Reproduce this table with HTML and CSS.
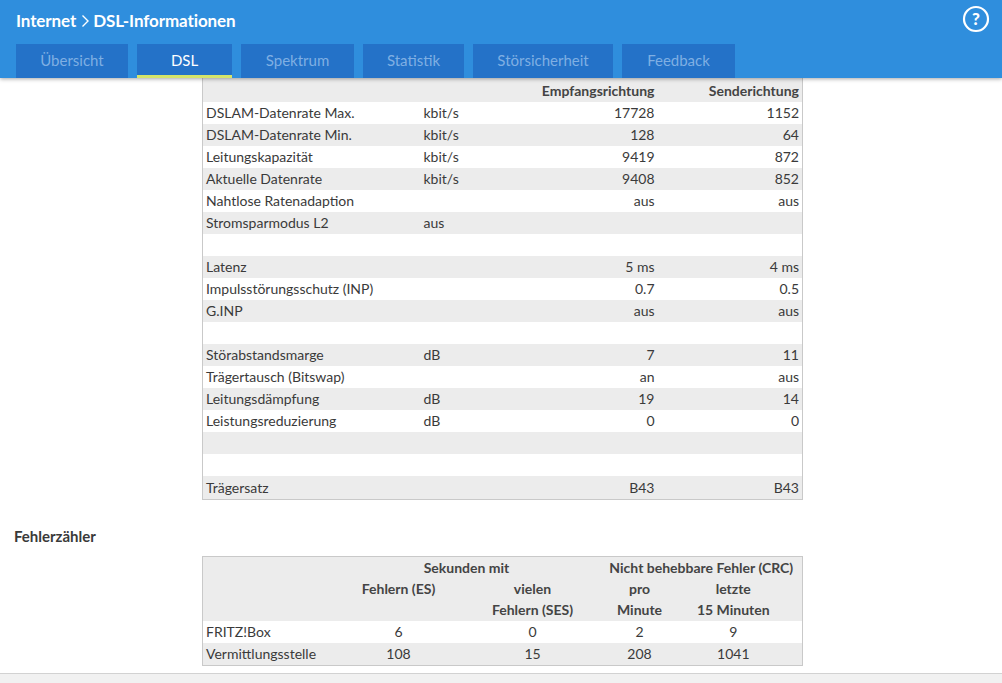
FILE: index.html
```html
<!DOCTYPE html>
<html lang="de">
<head>
<meta charset="utf-8">
<title>DSL-Informationen</title>
<link rel="stylesheet" href="styles.css">
</head>
<body>
<header class="topbar">
  <div class="titlebar">
    <h1 class="title">Internet<svg class="chev" width="9" height="14" viewBox="0 0 9 14"><path d="M1.5 1.5 L7 7 L1.5 12.5" fill="none" stroke="#fff" stroke-width="1.4"/></svg>DSL-Informationen</h1>
    <svg class="help" width="28" height="28" viewBox="0 0 28 28"><circle cx="14" cy="14" r="12" fill="none" stroke="#fff" stroke-width="2.2"/><text x="14" y="20" text-anchor="middle" class="help-q">?</text></svg>
  </div>
  <nav class="tabs">
    <a class="tab t1">Übersicht</a>
    <a class="tab t2 active">DSL</a>
    <a class="tab t3">Spektrum</a>
    <a class="tab t4">Statistik</a>
    <a class="tab t5">Störsicherheit</a>
    <a class="tab t6">Feedback</a>
  </nav>
</header>
<main class="content">
  <div class="tablewrap">
    <table class="dsl">
      <colgroup><col class="c1"><col class="c2"><col class="c3"><col class="c4"></colgroup>
      <thead>
        <tr><th></th><th></th><th class="r">Empfangsrichtung</th><th class="r">Senderichtung</th></tr>
      </thead>
      <tbody>
        <tr><td>DSLAM-Datenrate Max.</td><td>kbit/s</td><td class="r">17728</td><td class="r">1152</td></tr>
        <tr><td>DSLAM-Datenrate Min.</td><td>kbit/s</td><td class="r">128</td><td class="r">64</td></tr>
        <tr><td>Leitungskapazität</td><td>kbit/s</td><td class="r">9419</td><td class="r">872</td></tr>
        <tr><td>Aktuelle Datenrate</td><td>kbit/s</td><td class="r">9408</td><td class="r">852</td></tr>
        <tr><td>Nahtlose Ratenadaption</td><td></td><td class="r">aus</td><td class="r">aus</td></tr>
        <tr><td>Stromsparmodus L2</td><td>aus</td><td></td><td></td></tr>
        <tr><td></td><td></td><td></td><td></td></tr>
        <tr><td>Latenz</td><td></td><td class="r">5 ms</td><td class="r">4 ms</td></tr>
        <tr><td>Impulsstörungsschutz (INP)</td><td></td><td class="r">0.7</td><td class="r">0.5</td></tr>
        <tr><td>G.INP</td><td></td><td class="r">aus</td><td class="r">aus</td></tr>
        <tr><td></td><td></td><td></td><td></td></tr>
        <tr><td>Störabstandsmarge</td><td>dB</td><td class="r">7</td><td class="r">11</td></tr>
        <tr><td>Trägertausch (Bitswap)</td><td></td><td class="r">an</td><td class="r">aus</td></tr>
        <tr><td>Leitungsdämpfung</td><td>dB</td><td class="r">19</td><td class="r">14</td></tr>
        <tr><td>Leistungsreduzierung</td><td>dB</td><td class="r">0</td><td class="r">0</td></tr>
        <tr><td></td><td></td><td></td><td></td></tr>
        <tr><td></td><td></td><td></td><td></td></tr>
        <tr><td>Trägersatz</td><td></td><td class="r">B43</td><td class="r">B43</td></tr>
      </tbody>
    </table>
  </div>

  <h2 class="section">Fehlerzähler</h2>

  <div class="tablewrap">
    <table class="err">
      <colgroup><col class="e1"><col class="e2"><col class="e3"><col class="e4"><col class="e5"></colgroup>
      <thead>
        <tr><th></th><th colspan="2">Sekunden mit</th><th colspan="2">Nicht behebbare Fehler (CRC)</th></tr>
        <tr><th></th><th>Fehlern (ES)</th><th>vielen</th><th>pro</th><th class="last">letzte</th></tr>
        <tr><th></th><th></th><th>Fehlern (SES)</th><th>Minute</th><th class="last">15 Minuten</th></tr>
      </thead>
      <tbody>
        <tr><td class="l">FRITZ!Box</td><td>6</td><td>0</td><td>2</td><td class="last">9</td></tr>
        <tr class="g"><td class="l">Vermittlungsstelle</td><td>108</td><td>15</td><td>208</td><td class="last">1041</td></tr>
      </tbody>
    </table>
  </div>
</main>
<footer class="footer"></footer>
</body>
</html>
```

FILE: styles.css
```css
* { box-sizing: border-box; }
html, body { margin: 0; padding: 0; }
body {
  width: 1002px;
  height: 683px;
  overflow: hidden;
  background: #fff;
  font-family: Lato, "Liberation Sans", sans-serif;
  font-size: 14px;
  color: #3a3a3a;
  display: flex;
  flex-direction: column;
}

.topbar {
  background: #2f8edd;
  height: 78px;
  box-shadow: 0 1px 4px rgba(0, 0, 0, 0.35);
  position: relative;
  z-index: 2;
  flex: none;
}
.titlebar {
  height: 44px;
  display: flex;
  align-items: center;
  justify-content: space-between;
  padding: 0 12px 3px 16px;
}
.title {
  margin: 0;
  color: #fff;
  font-size: 17px;
  font-weight: 700;
  display: flex;
  align-items: center;
  letter-spacing: -0.1px;
}
.chev { margin: 1px 3px 0 5px; }
.help { display: block; margin-bottom: 3px; }
.help-q { fill: #fff; font-family: Lato, "Liberation Sans", sans-serif; font-size: 17px; font-weight: 900; }

.tabs {
  display: flex;
  gap: 9px;
  padding-left: 16px;
  height: 34px;
}
.tab {
  background: #2472c8;
  color: #7fafe3;
  font-size: 15px;
  display: flex;
  align-items: center;
  justify-content: center;
  height: 34px;
  padding-bottom: 2px;
}
.tab.active {
  color: #fff;
  box-shadow: inset 0 -3px 0 #d5e46a;
}
.t1 { width: 112px; }
.t2 { width: 95px; }
.t3 { width: 113px; }
.t4 { width: 101px; }
.t5 { width: 140px; }
.t6 { width: 113px; }

.content { flex: 1; }
.tablewrap { padding-left: 202px; }

table {
  border-collapse: collapse;
  table-layout: fixed;
  width: 600px;
  font-size: 14px;
}
.dsl { border: 1px solid #c9c9c9; border-top: 0; }
.dsl .c1 { width: 218px; }
.dsl .c2 { width: 80px; }
.dsl .c3 { width: 157px; }
.dsl .c4 { width: 145px; }
.dsl th, .dsl td {
  height: 22px;
  padding: 0 3px;
  text-align: left;
  white-space: nowrap;
  line-height: 22px;
}
.dsl thead th { height: 24px; font-weight: 700; color: #444; background: #ececec; padding-top: 2px; }
.dsl tbody tr:nth-child(even) td { background: #ececec; }
.dsl tbody tr:last-child td { padding-top: 1px; }
.dsl .r { text-align: right; }

.section {
  margin: 0;
  padding: 27px 0 0 14px;
  height: 56px;
  font-size: 15px;
  font-weight: 700;
  color: #3a3a3a;
}

.err { border: 1px solid #c9c9c9; }
.err .e1 { width: 130px; }
.err .e2 { width: 132px; }
.err .e3 { width: 136px; }
.err .e4 { width: 78px; }
.err .e5 { width: 124px; }
.err th, .err td {
  text-align: center;
  padding: 0;
  white-space: nowrap;
  line-height: 20px;
}
.err thead th { background: #ececec; font-weight: 700; color: #444; height: 21px; }
.err thead tr:first-child th { height: 22px; padding-top: 1px; }
.err thead tr:last-child th { padding-bottom: 1px; }
.err td { height: 22px; line-height: 22px; }
.err .last { padding-right: 14px; }
.err .l { text-align: left; padding-left: 3px; }
.err tr.g td { background: #ececec; }

.footer {
  flex: none;
  height: 10px;
  background: #f1f1f1;
  border-top: 1px solid #d2d2d2;
}
```
